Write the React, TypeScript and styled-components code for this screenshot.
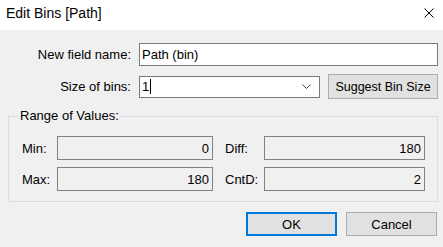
import React from "react";
import styled, { createGlobalStyle } from "styled-components";

const GlobalStyle = createGlobalStyle`
  html, body { margin: 0; padding: 0; }
  body {
    width: 443px;
    height: 247px;
    overflow: hidden;
    font-family: "Liberation Sans", Arial, sans-serif;
    font-size: 13px;
    color: #000;
  }
  * { box-sizing: border-box; }
`;

const Window = styled.div`
  width: 443px;
  height: 247px;
  display: flex;
  flex-direction: column;
  background: #f0f0f0;
`;

const TitleBar = styled.div`
  height: 30px;
  flex: none;
  background: #fff;
  display: flex;
  align-items: center;
  justify-content: space-between;
  padding: 0 9px 0 6px;
`;

const Title = styled.span`
  font-size: 14px;
  line-height: 16px;
  margin-top: -4px;
`;

const CloseIcon = styled.svg`
  width: 10px;
  height: 10px;
  margin-top: -4px;
`;

const Body = styled.div`
  flex: 1;
  display: flex;
  flex-direction: column;
  padding: 13px 5px 0 8px;
`;

const FieldRow = styled.div<{ $gap?: number }>`
  display: grid;
  grid-template-columns: 123px 1fr;
  column-gap: 8px;
  align-items: center;
  margin-top: ${(p) => p.$gap ?? 0}px;
`;

const RowLabel = styled.label`
  text-align: right;
  white-space: nowrap;
`;

const TextBox = styled.div`
  height: 23px;
  background: #fff;
  border: 1px solid #7a7a7a;
  padding: 0 2px;
  display: flex;
  align-items: center;
`;

const Caret = styled.span`
  display: inline-block;
  width: 1px;
  height: 15px;
  background: #000;
  margin-left: 1px;
  vertical-align: -3px;
`;

const ComboLine = styled.div`
  display: flex;
  align-items: center;
  gap: 8px;
`;

const Combo = styled.div`
  flex: 1;
  height: 22px;
  background: #fff;
  border: 1px solid #7a7a7a;
  padding: 0 8px 0 2px;
  display: flex;
  align-items: center;
  justify-content: space-between;
`;

const Chevron = styled.svg`
  width: 9px;
  height: 5px;
`;

const Button = styled.button<{ $default?: boolean; $width: number; $height: number; $size?: number }>`
  width: ${(p) => p.$width}px;
  height: ${(p) => p.$height}px;
  flex: none;
  background: #e1e1e1;
  border: ${(p) => (p.$default ? "2px solid #0078d7" : "1px solid #adadad")};
  font-family: inherit;
  font-size: ${(p) => p.$size ?? 13}px;
  color: #000;
  padding: 0;
  margin: 0;
`;

const Group = styled.fieldset`
  margin: 9px 0 0 0;
  padding: 0;
  border: 1px solid #dcdcdc;
  min-width: 0;
`;

const Legend = styled.legend`
  margin-left: 9px;
  padding: 0 2px;
  font-size: 13px;
  line-height: 16px;
`;

const RangeGrid = styled.div`
  display: grid;
  grid-template-columns: 35px 156px 51px 161px;
  row-gap: 7px;
  align-items: center;
  padding: 12px 13px 10px 13px;
`;

const RangeLabel = styled.span<{ $indent?: boolean }>`
  padding-left: ${(p) => (p.$indent ? 12 : 0)}px;
`;

const ReadOnly = styled.div`
  height: 24px;
  border: 1px solid #828282;
  background: #f0f0f0;
  display: flex;
  align-items: center;
  justify-content: flex-end;
  padding-right: 3px;
`;

const ButtonRow = styled.div`
  display: flex;
  justify-content: flex-end;
  gap: 9px;
  margin-top: 10px;
  padding-right: 1px;
`;

const ranges = [
  { l1: "Min:", v1: "0", l2: "Diff:", v2: "180" },
  { l1: "Max:", v1: "180", l2: "CntD:", v2: "2" },
];

export default function App() {
  return (
    <>
      <GlobalStyle />
      <Window>
        <TitleBar>
          <Title>Edit Bins [Path]</Title>
          <CloseIcon viewBox="0 0 10 10">
            <path d="M0.5 0.5 L9.5 9.5 M9.5 0.5 L0.5 9.5" stroke="#000" strokeWidth="1" fill="none" />
          </CloseIcon>
        </TitleBar>
        <Body>
          <FieldRow>
            <RowLabel>New field name:</RowLabel>
            <TextBox>Path (bin)</TextBox>
          </FieldRow>
          <FieldRow $gap={8}>
            <RowLabel>Size of bins:</RowLabel>
            <ComboLine>
              <Combo>
                <span>
                  1<Caret />
                </span>
                <Chevron viewBox="0 0 9 5">
                  <path d="M0.5 0.5 L4.5 4.5 L8.5 0.5" stroke="#444" strokeWidth="1" fill="none" />
                </Chevron>
              </Combo>
              <Button $width={110} $height={25} $size={12.5}>Suggest Bin Size</Button>
            </ComboLine>
          </FieldRow>
          <Group>
            <Legend>Range of Values:</Legend>
            <RangeGrid>
              {ranges.map((r) => (
                <React.Fragment key={r.l1}>
                  <RangeLabel>{r.l1}</RangeLabel>
                  <ReadOnly>{r.v1}</ReadOnly>
                  <RangeLabel $indent>{r.l2}</RangeLabel>
                  <ReadOnly>{r.v2}</ReadOnly>
                </React.Fragment>
              ))}
            </RangeGrid>
          </Group>
          <ButtonRow>
            <Button $default $width={91} $height={24}>OK</Button>
            <Button $width={91} $height={24}>Cancel</Button>
          </ButtonRow>
        </Body>
      </Window>
    </>
  );
}
